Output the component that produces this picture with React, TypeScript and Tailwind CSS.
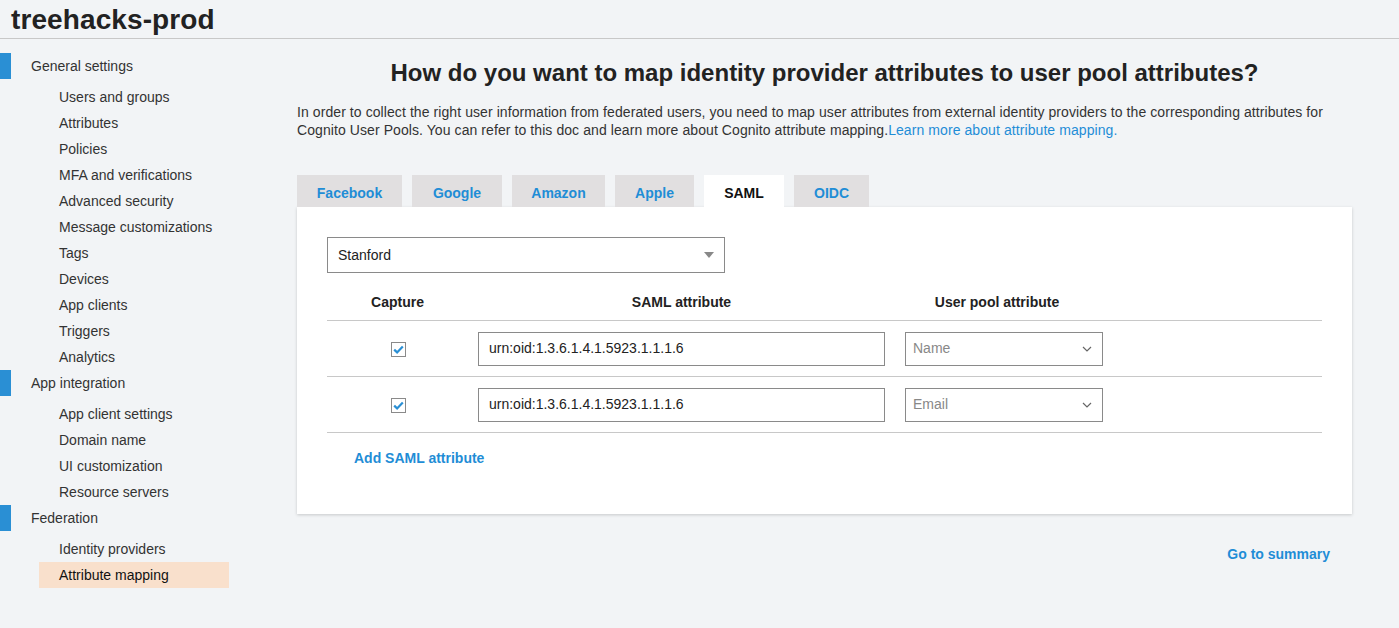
import { useState } from 'react';

const blue = 'text-[#1f8dd6]';

const sections = [
  {
    title: 'General settings',
    items: [
      'Users and groups',
      'Attributes',
      'Policies',
      'MFA and verifications',
      'Advanced security',
      'Message customizations',
      'Tags',
      'Devices',
      'App clients',
      'Triggers',
      'Analytics',
    ],
  },
  {
    title: 'App integration',
    items: ['App client settings', 'Domain name', 'UI customization', 'Resource servers'],
  },
  {
    title: 'Federation',
    items: ['Identity providers', 'Attribute mapping'],
  },
];

const tabs = ['Facebook', 'Google', 'Amazon', 'Apple', 'SAML', 'OIDC'];
const tabWidths: Record<string, string> = {
  Facebook: 'w-[105px]',
  Google: 'w-[90px]',
  Amazon: 'w-[93px]',
  Apple: 'w-[79px]',
  SAML: 'w-[80px]',
  OIDC: 'w-[75px]',
};

function Sidebar() {
  return (
    <nav className="w-[297px] shrink-0 pt-[14px]">
      {sections.map((s) => (
        <div key={s.title}>
          <div className="flex items-center h-[26px]">
            <div className="w-[11px] h-[26px] bg-[#2a8fd4]" />
            <span className="ml-[20px] text-[14px] text-[#333]">{s.title}</span>
          </div>
          <ul className="pt-[5px]">
            {s.items.map((it) => {
              const active = it === 'Attribute mapping';
              return (
                <li
                  key={it}
                  className={
                    'h-[26px] flex items-center ml-[39px] w-[190px] pl-[20px] text-[14px] ' +
                    (active ? 'bg-[#f9e0cc] text-[#111]' : 'text-[#333]')
                  }
                >
                  {it}
                </li>
              );
            })}
          </ul>
        </div>
      ))}
    </nav>
  );
}

function Chevron() {
  return (
    <svg width="10" height="6" viewBox="0 0 10 6" className="shrink-0">
      <path d="M1 1l4 4 4-4" fill="none" stroke="#666" strokeWidth="1.2" />
    </svg>
  );
}

function Check({ checked, onToggle }: { checked: boolean; onToggle: () => void }) {
  return (
    <button
      onClick={onToggle}
      className="w-[15px] h-[15px] border border-[#8a8a8a] bg-white flex items-center justify-center"
    >
      {checked && (
        <svg width="11" height="9" viewBox="0 0 11 9">
          <path d="M1.2 4.6l2.9 2.8L9.8 1.4" fill="none" stroke="#2a8fd4" strokeWidth="2.2" />
        </svg>
      )}
    </button>
  );
}

function Row({ value, attr }: { value: string; attr: string }) {
  const [checked, setChecked] = useState(true);
  return (
    <div className="flex items-center h-[56px] border-b border-[#c8c8c8]">
      <div className="w-[141px] flex justify-center pl-[1px] pt-[1px]">
        <Check checked={checked} onToggle={() => setChecked(!checked)} />
      </div>
      <div className="ml-[10px] w-[407px] h-[34px] border border-[#8a8a8a] flex items-center px-[10px] text-[14px] text-[#222]">
        {value}
      </div>
      <div className="ml-[20px] w-[198px] h-[34px] border border-[#8a8a8a] flex items-center justify-between pl-[7px] pr-[10px] text-[14px] text-[#888]">
        <span>{attr}</span>
        <Chevron />
      </div>
    </div>
  );
}

export default function App() {
  const [tab, setTab] = useState('SAML');
  return (
    <div
      className="w-[1399px] h-[628px] bg-[#f2f4f6] overflow-hidden text-[#333]"
      style={{ fontFamily: '"Liberation Sans", Arial, sans-serif' }}
    >
      <header className="h-[39px] border-b border-[#c8c8c8] flex items-center pl-[11px] pt-[2px]">
        <h1 className="text-[28px] font-bold text-[#222] leading-none tracking-[0.1px]">treehacks-prod</h1>
      </header>
      <div className="flex">
        <Sidebar />
        <main className="w-[1055px] shrink-0">
          <h2 className="mt-[20px] text-center text-[24px] font-bold text-[#222] leading-[28px]">
            How do you want to map identity provider attributes to user pool attributes?
          </h2>
          <p className="mt-[16px] text-[14px] leading-[18px] tracking-[0.08px] text-[#333]">
            In order to collect the right user information from federated users, you need to map user attributes from
            external identity providers to the corresponding attributes for Cognito User Pools. You can refer to this
            doc and learn more about Cognito attribute mapping.
            <a className={blue}>Learn more about attribute mapping.</a>
          </p>
          <div className="mt-[36px] flex gap-[10px]">
            {tabs.map((t) => (
              <button
                key={t}
                onClick={() => setTab(t)}
                className={
                  'h-[32px] pt-[4px] text-[14px] font-bold flex items-center justify-center ' +
                  tabWidths[t] +
                  (t === tab ? ' bg-white text-[#111]' : ' bg-[#e1dfe0] text-[#1f8dd6]')
                }
              >
                {t}
              </button>
            ))}
          </div>
          <section className="bg-white h-[307px] shadow-[0_1px_3px_rgba(0,0,0,0.18)] px-[30px] pt-[30px]">
            <div className="w-[398px] h-[36px] border border-[#8a8a8a] flex items-center justify-between pl-[10px] pr-[10px] text-[14px] text-[#222]">
              <span>Stanford</span>
              <svg width="10" height="6" viewBox="0 0 10 6">
                <path d="M0 0h10L5 6z" fill="#888" />
              </svg>
            </div>
            <div className="mt-[17px] flex items-start h-[31px] pt-[4px] border-b border-[#c8c8c8] text-[14px] leading-[16px] font-bold text-[#222]">
              <div className="w-[141px] text-center">Capture</div>
              <div className="ml-[10px] w-[407px] text-center">SAML attribute</div>
              <div className="ml-[20px] w-[198px] text-center pr-[14px]">User pool attribute</div>
            </div>
            <Row value="urn:oid:1.3.6.1.4.1.5923.1.1.1.6" attr="Name" />
            <Row value="urn:oid:1.3.6.1.4.1.5923.1.1.1.6" attr="Email" />
            <button className={'mt-[15px] ml-[27px] text-[14px] font-bold ' + blue}>Add SAML attribute</button>
          </section>
          <div className="flex justify-end pr-[22px] mt-[30px]">
            <button className={'text-[14px] font-bold ' + blue}>Go to summary</button>
          </div>
        </main>
      </div>
    </div>
  );
}
